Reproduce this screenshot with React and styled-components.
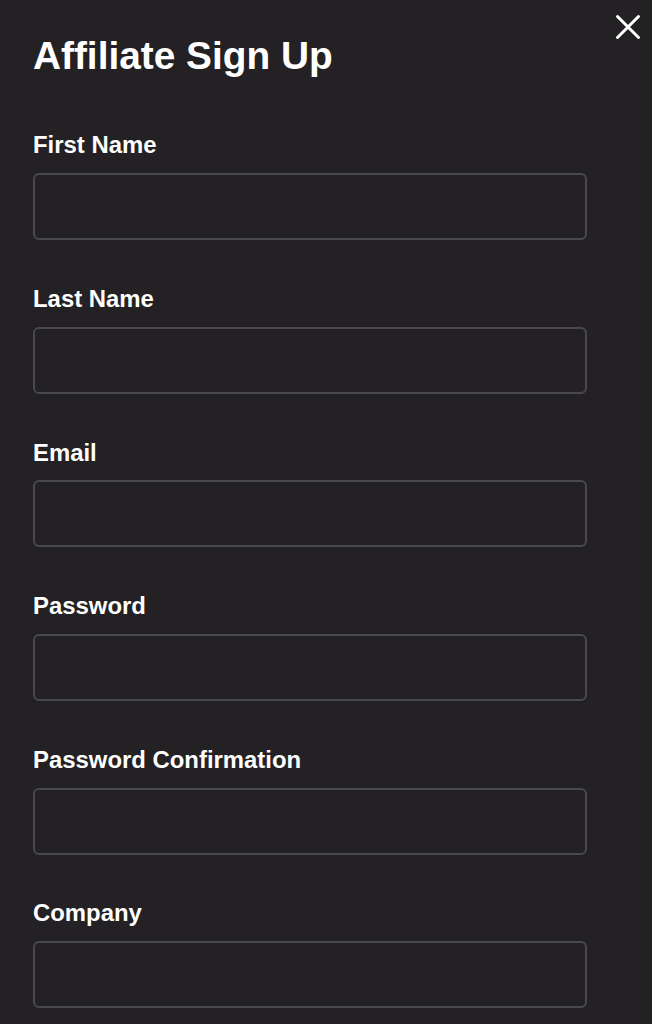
import React from "react";
import styled, { createGlobalStyle } from "styled-components";

const Global = createGlobalStyle`
  html, body {
    margin: 0;
    padding: 0;
    background: #232124;
  }
  body {
    font-family: "Liberation Sans", Arial, Helvetica, sans-serif;
    color: #ffffff;
  }
`;

const Panel = styled.div`
  position: relative;
  box-sizing: border-box;
  width: 652px;
  min-height: 1024px;
  background: #232124;
  padding: 34px 65px 0 33px;
`;

const CloseButton = styled.button`
  position: absolute;
  top: 14px;
  right: 10px;
  width: 28px;
  height: 26px;
  padding: 0;
  border: none;
  background: transparent;
  cursor: pointer;
  display: flex;
  align-items: center;
  justify-content: center;
`;

const Title = styled.h1`
  margin: 0 0 53.4px;
  font-size: 38.8px;
  line-height: 44px;
  font-weight: 700;
`;

const Form = styled.form`
  display: flex;
  flex-direction: column;
  gap: 44.8px;
`;

const Field = styled.div`
  display: flex;
  flex-direction: column;
`;

const Label = styled.label`
  font-size: 23.9px;
  line-height: 28px;
  font-weight: 700;
  margin-bottom: 13.8px;
`;

const Input = styled.input`
  box-sizing: border-box;
  width: 554px;
  height: 67px;
  background: transparent;
  border: 2px solid #49484c;
  border-radius: 6px;
  color: #fff;
  font-family: inherit;
  font-size: 20px;
  padding: 0 16px;
  outline: none;
`;

const fields = [
  { id: "first", label: "First Name", type: "text" },
  { id: "last", label: "Last Name", type: "text" },
  { id: "email", label: "Email", type: "email" },
  { id: "password", label: "Password", type: "password" },
  { id: "confirm", label: "Password Confirmation", type: "password" },
  { id: "company", label: "Company", type: "text" },
];

export default function App() {
  return (
    <>
      <Global />
      <Panel>
        <CloseButton aria-label="Close">
          <svg width="28" height="26" viewBox="0 0 28 26">
            <path
              d="M3.5 2.5 L24.5 23.5 M24.5 2.5 L3.5 23.5"
              stroke="#ffffff"
              strokeWidth="3"
              strokeLinecap="round"
            />
          </svg>
        </CloseButton>
        <Title>Affiliate Sign Up</Title>
        <Form>
          {fields.map((f) => (
            <Field key={f.id}>
              <Label htmlFor={f.id}>{f.label}</Label>
              <Input id={f.id} type={f.type} />
            </Field>
          ))}
        </Form>
      </Panel>
    </>
  );
}
